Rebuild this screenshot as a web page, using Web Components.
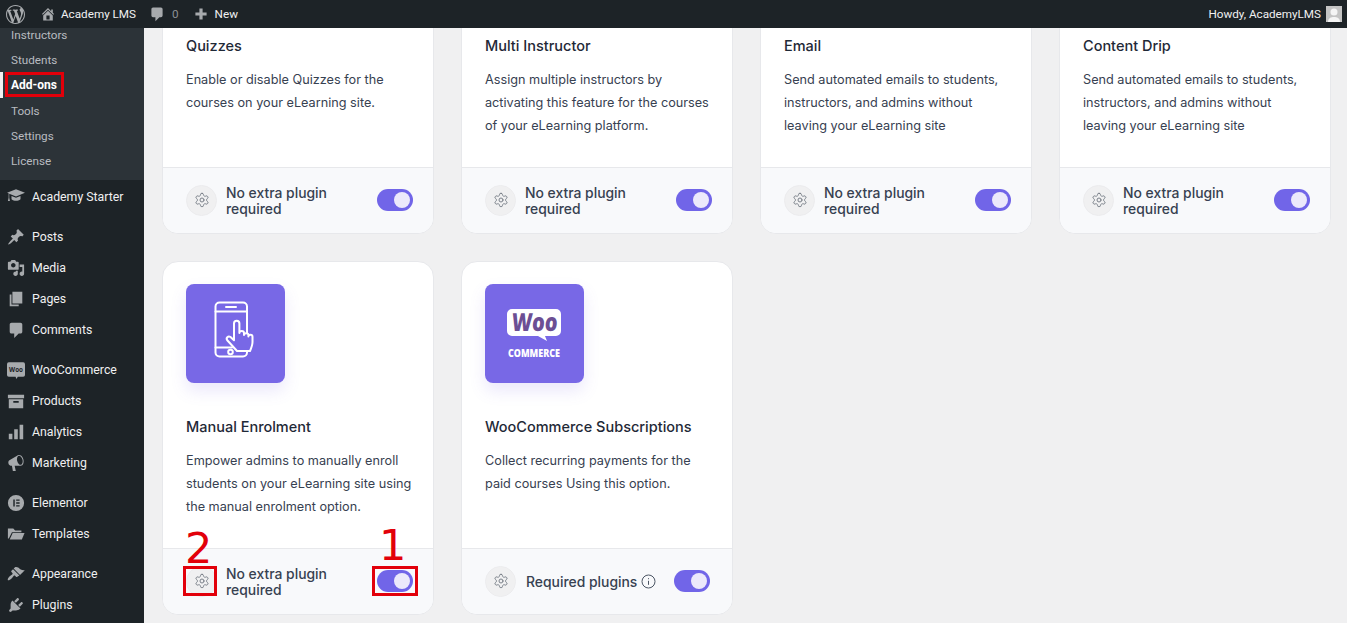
<!DOCTYPE html>
<html lang="en">
<head>
<meta charset="utf-8">
<title>Academy LMS Add-ons</title>
<style>
  html, body { margin: 0; height: 100%; overflow: hidden; background: #f0f0f1; }
  body { display: flex; flex-direction: column; position: relative; font-family: Roboto, sans-serif; }
</style>
</head>
<body>
<wp-admin-bar></wp-admin-bar>
<wp-layout>
  <wp-sidebar slot="side">
    <wp-sub-item>Instructors</wp-sub-item>
    <wp-sub-item>Students</wp-sub-item>
    <wp-sub-item current>Add-ons</wp-sub-item>
    <wp-sub-item>Tools</wp-sub-item>
    <wp-sub-item>Settings</wp-sub-item>
    <wp-sub-item>License</wp-sub-item>
    <wp-menu-item slot="menu" icon="academy" tall>Academy Starter</wp-menu-item>
    <wp-menu-item slot="menu" icon="pin" sep>Posts</wp-menu-item>
    <wp-menu-item slot="menu" icon="media">Media</wp-menu-item>
    <wp-menu-item slot="menu" icon="pages">Pages</wp-menu-item>
    <wp-menu-item slot="menu" icon="comment">Comments</wp-menu-item>
    <wp-menu-item slot="menu" icon="woo" sep>WooCommerce</wp-menu-item>
    <wp-menu-item slot="menu" icon="archive">Products</wp-menu-item>
    <wp-menu-item slot="menu" icon="bars">Analytics</wp-menu-item>
    <wp-menu-item slot="menu" icon="megaphone">Marketing</wp-menu-item>
    <wp-menu-item slot="menu" icon="elementor" sep>Elementor</wp-menu-item>
    <wp-menu-item slot="menu" icon="folder">Templates</wp-menu-item>
    <wp-menu-item slot="menu" icon="brush" sep>Appearance</wp-menu-item>
    <wp-menu-item slot="menu" icon="plug">Plugins</wp-menu-item>
  </wp-sidebar>
  <addon-grid>
    <addon-card heading="Quizzes">Enable or disable Quizzes for the courses on your eLearning site.</addon-card>
    <addon-card heading="Multi Instructor">Assign multiple instructors by activating this feature for the courses of your eLearning platform.</addon-card>
    <addon-card heading="Email">Send automated emails to students, instructors, and admins without leaving your eLearning site</addon-card>
    <addon-card heading="Content Drip">Send automated emails to students, instructors, and admins without leaving your eLearning site</addon-card>
    <addon-card heading="Manual Enrolment" logo="phone">Empower admins to manually enroll students on your eLearning site using the manual enrolment option.</addon-card>
    <addon-card heading="WooCommerce Subscriptions" logo="woo" requires>Collect recurring payments for the paid courses Using this option.</addon-card>
  </addon-grid>
</wp-layout>
<red-mark x="5" y="72" w="59" h="25"></red-mark>
<red-mark x="372" y="566" w="46" h="30"></red-mark>
<red-mark x="183" y="566" w="34" h="30"></red-mark>
<red-number x="185" y="523">2</red-number>
<red-number x="379" y="520">1</red-number>

<script>
const dashicons = {
  wordpress: '<path d="M20 10c0-5.51-4.49-10-10-10C4.48 0 0 4.49 0 10c0 5.52 4.48 10 10 10 5.51 0 10-4.48 10-10zM7.78 15.37L4.37 6.22c.55-.02 1.17-.08 1.17-.08.5-.06.44-1.13-.06-1.11 0 0-1.45.11-2.37.11-.18 0-.37 0-.58-.01C4.12 2.69 6.87 1.11 10 1.11c2.33 0 4.45.87 6.05 2.34-.68-.11-1.65.39-1.65 1.58 0 .74.45 1.36.9 2.1.35.61.55 1.36.55 2.46 0 1.49-1.4 5-1.4 5l-3.03-8.37c.54-.02.82-.17.82-.17.5-.05.44-1.25-.06-1.22 0 0-1.44.12-2.38.12-.87 0-2.33-.12-2.33-.12-.5-.03-.56 1.2-.06 1.22l.92.08 1.26 3.41zM17.41 10c.24-.64.74-1.87.43-4.25.7 1.29 1.05 2.71 1.05 4.25 0 3.29-1.73 6.24-4.4 7.78.97-2.59 1.94-5.2 2.92-7.78zM6.1 18.09C3.12 16.65 1.11 13.53 1.11 10c0-1.3.23-2.48.72-3.59C3.25 10.3 4.67 14.2 6.1 18.09zm4.03-6.63l2.58 6.98c-.86.29-1.76.45-2.71.45-.79 0-1.57-.11-2.29-.33.81-2.38 1.62-4.74 2.42-7.1z"/>',
  home: '<path d="M16 8.5l1.53 1.53-1.06 1.06L10 4.62l-6.47 6.47-1.06-1.06L10 2.5l4 4v-2h2v4zm-6-2.46l6 5.99V18H4v-5.97zM12 17v-5H8v5h4z"/>',
  comment: '<path d="M5 2h10c1.1 0 2 .9 2 2v8c0 1.1-.9 2-2 2h-2l-5 5v-5H5c-1.1 0-2-.9-2-2V4c0-1.1.9-2 2-2z"/>',
  plus: '<path d="M17 8v4h-5v5H8v-5H3V8h5V3h4v5h5z"/>',
  pin: '<path d="M10.44 3.02l1.82-1.82 6.36 6.35-1.83 1.82c-1.05-.68-2.48-.57-3.41.36l-.75.75c-.92.93-1.04 2.35-.35 3.41l-1.83 1.82-2.41-2.41-2.8 2.79c-.42.42-3.38 2.71-3.8 2.29s1.86-3.39 2.28-3.81l2.79-2.79L4.1 9.36l1.83-1.82c1.05.69 2.48.57 3.4-.36l.75-.75c.93-.92 1.05-2.35.36-3.41z"/>',
  media: '<path d="M13 11V4c0-.55-.45-1-1-1h-1.67L9 1H5L3.67 3H2c-.55 0-1 .45-1 1v7c0 .55.45 1 1 1h10c.55 0 1-.45 1-1zM7 4.5c1.38 0 2.5 1.12 2.5 2.5S8.38 9.5 7 9.5 4.5 8.38 4.5 7 5.62 4.5 7 4.5zM14 6h5v10.5c0 1.38-1.12 2.5-2.5 2.5S14 17.88 14 16.5s1.12-2.5 2.5-2.5c.17 0 .34.02.5.05V9h-3V6zm-4 8.05V13h2v3.5c0 1.38-1.12 2.5-2.5 2.5S7 17.88 7 16.5 8.12 14 9.5 14c.17 0 .34.02.5.05z"/>',
  pages: '<path d="M6 15V2h11v13H6zm-1 1h8v2H3V5h2v11z"/>',
  archive: '<path d="M19 3v4H1V3h18zM2 8h16v10H2V8zm11 2H7v2h6v-2z"/>',
  bars: '<path d="M18 18V2h-4v16h4zm-6 0V7H8v11h4zm-6 0v-6H2v6h4z"/>',
  megaphone: '<path d="M18.15 5.94c.46 1.62.38 3.22-.02 4.48-.42 1.28-1.26 2.18-2.3 2.48-.16.06-.26.06-.4.06-.06.02-.12.02-.18.02-.06.02-.14.02-.22.02H8.5l1.2 5.5c.02.14-.06.26-.14.34-.08.1-.24.16-.34.16H6.95c-.1 0-.26-.06-.34-.16-.08-.08-.16-.2-.14-.34l-1-5.5H4.25l-.02-.02c-.5.06-1.08-.18-1.54-.62s-.88-1.08-1.06-1.88c-.24-.8-.2-1.56-.02-2.2.2-.62.58-1.08 1.06-1.3l.02-.02 9-5.4c.1-.06.18-.1.24-.16.06-.04.14-.08.24-.12.16-.08.28-.12.5-.18 1.04-.3 2.24.1 3.22.98s1.84 2.24 2.26 3.86zm-2.58 5.98h-.02c.4-.1.74-.34 1.04-.7.58-.7.86-1.76.86-3.04 0-.64-.1-1.3-.28-1.98-.34-1.36-1.02-2.5-1.78-3.24s-1.68-1.1-2.46-.88c-.38.12-.72.34-1.02.7-.58.7-.86 1.76-.86 3.04 0 .64.1 1.3.28 1.98.34 1.36 1.02 2.5 1.78 3.24.78.74 1.62 1.1 2.46.88z"/>',
  elementor: '<path fill-rule="evenodd" d="M10 1a9 9 0 1 1 0 18 9 9 0 0 1 0-18zM7 6v8h1.6V6H7zm3.2 0v1.6H14V6h-3.800zm0 3.200v1.600H14V9.200h-3.800zm0 3.200V14H14v-1.600h-3.800z"/>',
  folder: '<path d="M1 4h6l2 2h7v2H5.500L2 15H1V4z"/><path d="M6.300 9H19.500l-3 7H3z"/>',
  brush: '<path d="M14.480 11.060L7.410 3.990l1.500-1.500c.5-.56 2.300-.47 3.510.32 1.210.8 1.430 1.280 2.910 2.100 1.180.64 2.450 1.260 4.450.85zm-.71.710L6.700 4.700 4.930 6.470c-.39.39-.39 1.020 0 1.410l1.060 1.060c.39.39.39 1.030 0 1.420-.6.6-1.430 1.110-2.210 1.690-.35.26-.7.53-1.010.84-1.430 1.430-2.370 3.400-1.770 4 .6.6 2.570-.34 4-1.770.31-.31.58-.66.84-1.010.58-.78 1.090-1.610 1.690-2.210.39-.39 1.030-.39 1.420 0l1.060 1.060c.39.39 1.020.39 1.410 0z"/>',
  plug: '<path d="M13.110 4.360L9.870 7.600 8 5.730l3.240-3.240c.35-.34 1.050-.2 1.560.32.52.51.66 1.210.31 1.550zm-8 1.770l.91-1.120 9.010 9.010-1.190.84c-.71.71-2.630 1.160-3.820 1.160H6.140L4.900 17.260c-.59.59-1.540.59-2.120 0-.59-.58-.59-1.530 0-2.120l1.240-1.240v-3.880c0-1.130.4-3.190 1.090-3.890zm7.260 3.970l3.240-3.240c.34-.35 1.040-.21 1.550.31.52.51.66 1.210.31 1.550l-3.240 3.250z"/>',
  academy: '<path d="M10 2.500 20 6.500 10 10.500 2.500 7.500V12l.8 3.500H1l.8-3.500V7L0 6.500z"/><path d="M5 10l5 2 5-2v3.500c-1.500 1.200-3.200 1.800-5 1.800s-3.500-.6-5-1.800z"/>',
  woo: '<path d="M2 1.500h16a2 2 0 0 1 2 2v12a2 2 0 0 1-2 2h-6l-1.500 2.500-1-2.500H2a2 2 0 0 1-2-2v-12a2 2 0 0 1 2-2z"/><text x="10" y="12" text-anchor="middle" font-family="Open Sans, sans-serif" font-size="7" font-weight="700" fill="#1d2327">Woo</text>'
}

const gearIcon = `<svg width="16" height="16" viewBox="0 0 24 24" fill="none" stroke="#7b818a" stroke-width="1.500" stroke-linecap="round" stroke-linejoin="round"><path d="M12.220 2h-.44a2 2 0 0 0-2 2v.18a2 2 0 0 1-1 1.730l-.43.25a2 2 0 0 1-2 0l-.15-.08a2 2 0 0 0-2.730.73l-.22.38a2 2 0 0 0 .73 2.730l.15.1a2 2 0 0 1 1 1.720v.51a2 2 0 0 1-1 1.740l-.15.09a2 2 0 0 0-.73 2.730l.22.38a2 2 0 0 0 2.730.73l.15-.08a2 2 0 0 1 2 0l.43.25a2 2 0 0 1 1 1.730V20a2 2 0 0 0 2 2h.44a2 2 0 0 0 2-2v-.18a2 2 0 0 1 1-1.730l.43-.25a2 2 0 0 1 2 0l.15.08a2 2 0 0 0 2.730-.73l.22-.39a2 2 0 0 0-.73-2.730l-.15-.08a2 2 0 0 1-1-1.740v-.5a2 2 0 0 1 1-1.740l.15-.09a2 2 0 0 0 .73-2.730l-.22-.38a2 2 0 0 0-2.730-.73l-.15.08a2 2 0 0 1-2 0l-.43-.25a2 2 0 0 1-1-1.730V4a2 2 0 0 0-2-2z"/><circle cx="12" cy="12" r="3"/></svg>`

const logos = {
  phone: `<svg width="99" height="99" viewBox="0 0 99 99" fill="none" stroke="#fff" stroke-width="2" stroke-linecap="round" stroke-linejoin="round">
    <rect x="29.500" y="18.500" width="31.500" height="54" rx="4"/>
    <path d="M29.500 27.500H61M40 23h10M29.500 63.500H46"/>
    <circle cx="44.500" cy="68" r="2.300"/>
    <path fill="#7868e6" d="M51 67 41.500 56.500c-2.200-2.400.8-5.200 3-3.400l3.500 3.200V39.500c0-3.600 5.400-3.600 5.400 0V49c0-2.600 4.600-2.600 4.600 0v2c0-2.400 4.400-2.400 4.400 0v1.500c0-2.400 4.100-2.200 4.100.3V58c0 3-1 5.500-2.500 9z"/>
  </svg>`,
  woo: `<svg width="99" height="99" viewBox="0 0 99 99">
    <path fill="#fff" d="M27 25h44a5 5 0 0 1 5 5v17a5 5 0 0 1-5 5H60l2 5-9-5H27a5 5 0 0 1-5-5V30a5 5 0 0 1 5-5z"/>
    <text x="49" y="47" text-anchor="middle" transform="skewX(-5) translate(4 0)" font-family="Open Sans, sans-serif" font-size="25" font-weight="800" fill="#6c4f94" textLength="46" lengthAdjust="spacingAndGlyphs">Woo</text>
    <text x="49" y="73" text-anchor="middle" font-family="Open Sans, sans-serif" font-size="10" font-weight="800" fill="#fff" textLength="52" lengthAdjust="spacingAndGlyphs">COMMERCE</text>
  </svg>`
}

const adminBarTemplate = document.createElement('template')
adminBarTemplate.innerHTML = `
  <style>
    :host {
      display: flex;
      flex: none;
      align-items: center;
      height: 28px;
      background: #1d2327;
      color: #f0f0f1;
      font: 11.700px/28px Roboto, sans-serif;
      position: relative;
      z-index: 2;
    }
    svg { fill: #a7aaad; display: block; flex: none; }
    .left { display: flex; align-items: center; flex: 1; }
    .logo { margin-left: 6px; }
    .home { margin-left: 15px; }
    .site { margin-left: 5px; }
    .bubble { margin-left: 13px; }
    .count { margin-left: 7px; color: #8c8f94; }
    .plus { margin-left: 14px; }
    .new { margin-left: 6px; }
    .howdy { margin-right: 5px; }
    .avatar {
      width: 16px;
      height: 16px;
      margin-right: 5px;
      background: #c4c4c4;
      overflow: hidden;
    }
    .avatar svg { fill: #f4f4f4; }
  </style>
  <div class="left">
    <svg class="logo" width="19" height="19" viewBox="0 0 20 20">${dashicons.wordpress}</svg>
    <svg class="home" width="16" height="16" viewBox="0 0 20 20">${dashicons.home}</svg>
    <span class="site">Academy LMS</span>
    <svg class="bubble" width="16" height="16" viewBox="0 0 20 20">${dashicons.comment}</svg>
    <span class="count">0</span>
    <svg class="plus" width="16" height="16" viewBox="0 0 20 20">${dashicons.plus}</svg>
    <span class="new">New</span>
  </div>
  <span class="howdy">Howdy, AcademyLMS</span>
  <div class="avatar"><svg width="16" height="16" viewBox="0 0 16 16"><circle cx="8" cy="6" r="3.500"/><path d="M2 16c0-4 3-5 6-5s6 1 6 5z"/></svg></div>
`

customElements.define('wp-admin-bar',
  class extends HTMLElement {
    constructor() {
      super()
      this.attachShadow({ mode: 'open' })
        .appendChild(adminBarTemplate.content.cloneNode(true))
    }
  }
)

const layoutTemplate = document.createElement('template')
layoutTemplate.innerHTML = `
  <style>
    :host {
      display: flex;
      flex: 1;
      min-height: 0;
      overflow: hidden;
    }
    ::slotted([slot="side"]) { flex: none; }
  </style>
  <slot name="side"></slot>
  <slot></slot>
`

customElements.define('wp-layout',
  class extends HTMLElement {
    constructor() {
      super()
      this.attachShadow({ mode: 'open' })
        .appendChild(layoutTemplate.content.cloneNode(true))
    }
  }
)

const sidebarTemplate = document.createElement('template')
sidebarTemplate.innerHTML = `
  <style>
    :host {
      display: block;
      width: 144px;
      background: #1d2327;
      overflow: hidden;
    }
    /* the admin menu is scrolled a little, so the first row sits under the bar */
    .sub {
      margin-top: -6px;
      padding-bottom: 7px;
      background: #2c3338;
    }
  </style>
  <div class="sub"><slot></slot></div>
  <slot name="menu"></slot>
`

customElements.define('wp-sidebar',
  class extends HTMLElement {
    constructor() {
      super()
      this.attachShadow({ mode: 'open' })
        .appendChild(sidebarTemplate.content.cloneNode(true))
    }
  }
)

const subItemTemplate = document.createElement('template')
subItemTemplate.innerHTML = `
  <style>
    :host {
      display: block;
      height: 25.200px;
      padding-left: 11px;
      color: #b9bcc0;
      font: 11.700px/26px Roboto, sans-serif;
    }
    :host([current]) {
      color: #fff;
      font-size: 12px;
      font-weight: 700;
      box-shadow: inset 3px 0 0 #f0f0f1;
    }
  </style>
  <slot></slot>
`

customElements.define('wp-sub-item',
  class extends HTMLElement {
    constructor() {
      super()
      this.attachShadow({ mode: 'open' })
        .appendChild(subItemTemplate.content.cloneNode(true))
    }
  }
)

const menuItemTemplate = document.createElement('template')
menuItemTemplate.innerHTML = `
  <style>
    :host {
      display: flex;
      align-items: center;
      gap: 7px;
      height: 31px;
      padding-left: 7px;
      color: #f0f0f1;
      font: 12.300px/31px Roboto, sans-serif;
    }
    :host([sep]) { margin-top: 9px; }
    :host([tall]) { height: 32px; }
    svg { fill: #a7aaad; flex: none; display: block; }
    .label { padding-top: 2px; }
  </style>
  <svg width="18" height="18" viewBox="0 0 20 20"></svg>
  <span class="label"><slot></slot></span>
`

customElements.define('wp-menu-item',
  class extends HTMLElement {
    constructor() {
      super()
      this.attachShadow({ mode: 'open' })
        .appendChild(menuItemTemplate.content.cloneNode(true))
    }

    connectedCallback() {
      this.shadowRoot.querySelector('svg').innerHTML = dashicons[this.getAttribute('icon')]
    }
  }
)

const gridTemplate = document.createElement('template')
gridTemplate.innerHTML = `
  <style>
    :host {
      display: block;
      flex: 1;
      min-width: 0;
      padding: 0 16px 0 18px;
    }
    /* the page is scrolled: the first row's pictures are above the fold */
    .grid {
      display: grid;
      grid-template-columns: repeat(4, 272px);
      column-gap: 27px;
      row-gap: 27px;
      margin-top: -148px;
    }
  </style>
  <div class="grid"><slot></slot></div>
`

customElements.define('addon-grid',
  class extends HTMLElement {
    constructor() {
      super()
      this.attachShadow({ mode: 'open' })
        .appendChild(gridTemplate.content.cloneNode(true))
    }
  }
)

const cardTemplate = document.createElement('template')
cardTemplate.innerHTML = `
  <style>
    :host {
      display: flex;
      flex-direction: column;
      height: 354px;
      box-sizing: border-box;
      background: #fff;
      border: 1px solid #e7e8eb;
      border-radius: 16px;
      overflow: hidden;
      font-family: Inter, sans-serif;
    }
    .body {
      flex: 1;
      padding: 22px 20px 0 23px;
    }
    .logo {
      width: 99px;
      height: 99px;
      background: #7868e6;
      border-radius: 8px;
      box-shadow: 0 8px 16px rgba(120, 104, 230, .15);
    }
    h3 {
      margin: 34px 0 0;
      font-size: 14.500px;
      line-height: 20px;
      font-weight: 500;
      color: #1f2937;
    }
    p {
      margin: 12.200px 0 0;
      font-size: 12.700px;
      line-height: 23px;
      color: #374151;
    }
    footer {
      flex: none;
      display: flex;
      align-items: center;
      height: 66px;
      box-sizing: border-box;
      padding: 0 20px 1px 23px;
      background: #f8f9fb;
      border-top: 1px solid #e7e8eb;
    }
    .gear {
      flex: none;
      display: grid;
      place-items: center;
      width: 31px;
      height: 31px;
      border-radius: 50%;
      background: #f0f0f1;
      border: 1px solid #ececee;
      box-sizing: border-box;
    }
    .note {
      flex: 1;
      margin: 1px 0 0 9px;
      display: flex;
      align-items: center;
      gap: 5px;
      font-size: 13.900px;
      line-height: 16px;
      font-weight: 500;
      color: #374151;
    }
    .info { flex: none; display: block; }
    .switch {
      flex: none;
      width: 36px;
      height: 22px;
      border-radius: 11px;
      background: #7165e8;
      display: flex;
      align-items: center;
      justify-content: flex-end;
      padding-right: 3px;
      box-sizing: border-box;
    }
    .switch i {
      display: block;
      width: 16px;
      height: 16px;
      border-radius: 50%;
      background: #ece9fb;
    }
    :host([requires]) .note { white-space: nowrap; margin-left: 10px; gap: 4px; }
    :host([requires]) .switch { margin-right: 2px; }
  </style>
  <div class="body">
    <div class="logo"></div>
    <h3></h3>
    <p><slot></slot></p>
  </div>
  <footer>
    <div class="gear">${gearIcon}</div>
    <div class="note"></div>
    <div class="switch"><i></i></div>
  </footer>
`

customElements.define('addon-card',
  class extends HTMLElement {
    constructor() {
      super()
      this.attachShadow({ mode: 'open' })
        .appendChild(cardTemplate.content.cloneNode(true))
    }

    connectedCallback() {
      const root = this.shadowRoot
      root.querySelector('h3').textContent = this.getAttribute('heading')
      const logo = this.getAttribute('logo')
      if (logo) root.querySelector('.logo').innerHTML = logos[logo]
      const note = root.querySelector('.note')
      if (this.hasAttribute('requires')) {
        note.innerHTML = `<span>Required plugins</span><svg class="info" width="15" height="15" viewBox="0 0 15 15" fill="none" stroke="#4b5563" stroke-width="1"><circle cx="7.500" cy="7.500" r="6.500"/><path d="M7.500 6.800v4M7.500 4.200v1"/></svg>`
      } else {
        note.textContent = 'No extra plugin required'
      }
    }
  }
)

customElements.define('red-mark',
  class extends HTMLElement {
    constructor() {
      super()
      this.attachShadow({ mode: 'open' }).innerHTML = `
        <style>
          :host {
            display: block;
            position: absolute;
            box-sizing: border-box;
            border: 3px solid #e2000a;
            z-index: 3;
          }
        </style>
      `
    }

    connectedCallback() {
      this.style.left = this.getAttribute('x') + 'px'
      this.style.top = this.getAttribute('y') + 'px'
      this.style.width = this.getAttribute('w') + 'px'
      this.style.height = this.getAttribute('h') + 'px'
    }
  }
)

customElements.define('red-number',
  class extends HTMLElement {
    constructor() {
      super()
      this.attachShadow({ mode: 'open' }).innerHTML = `
        <style>
          :host {
            display: block;
            position: absolute;
            color: #e2000a;
            font: 43px/50px "DejaVu Sans", sans-serif;
            z-index: 3;
          }
        </style>
        <slot></slot>
      `
    }

    connectedCallback() {
      this.style.left = this.getAttribute('x') + 'px'
      this.style.top = this.getAttribute('y') + 'px'
    }
  }
)
</script>
</body>
</html>
